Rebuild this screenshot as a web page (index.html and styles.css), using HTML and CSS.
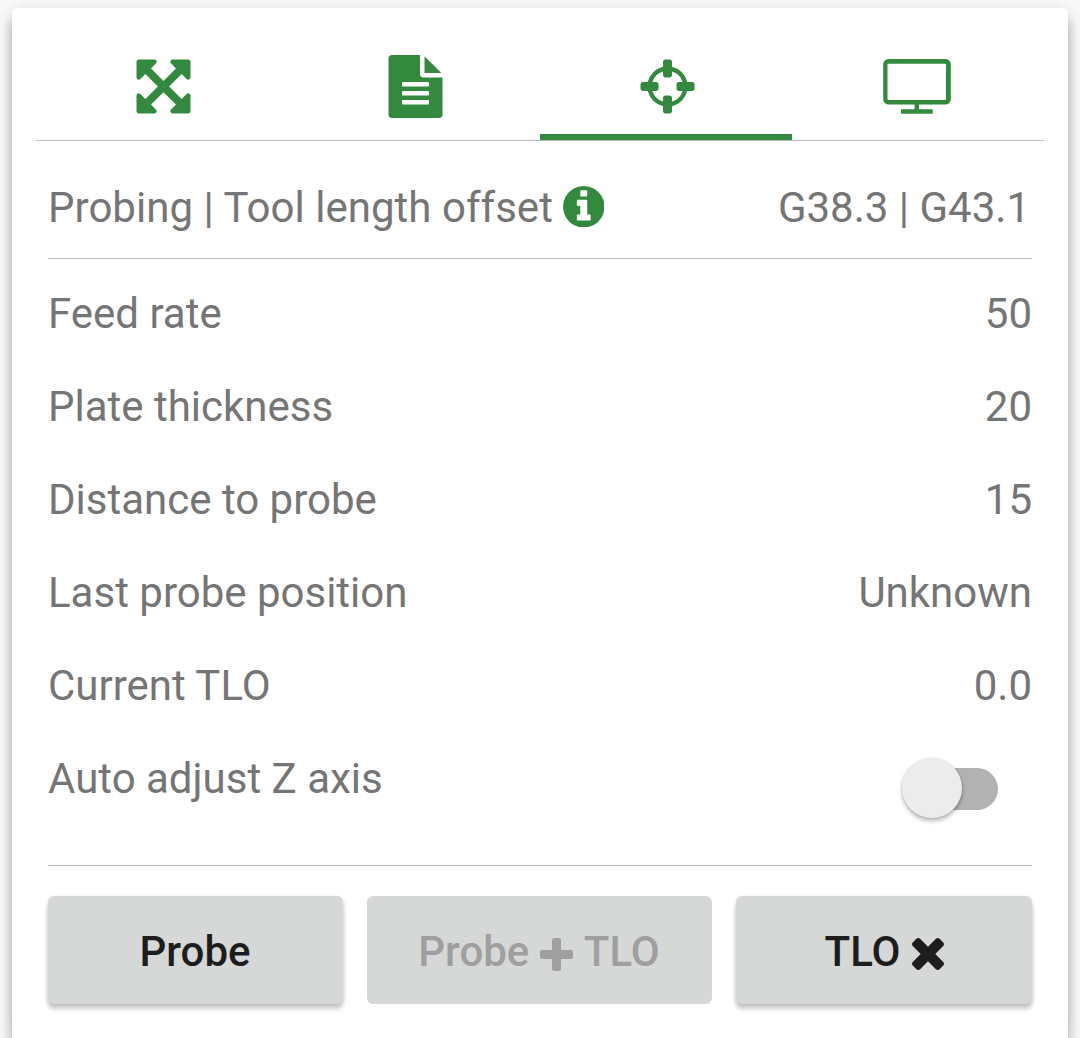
FILE: index.html
```html
<!DOCTYPE html>
<html lang="en">
<head>
<meta charset="utf-8">
<title>Probing</title>
<link rel="stylesheet" href="styles.css">
</head>
<body>
<main class="card">
  <nav class="tabs">
    <a class="tab"><svg class="tab-icon" viewBox="0 0 1792 1792"><path d="M1411 541l-355 355 355 355 144-144q29-31 70-14 39 17 39 59v448q0 26-19 45t-45 19h-448q-42 0-59-40-17-39 14-69l144-144-355-355-355 355 144 144q31 30 14 69-17 40-59 40h-448q-26 0-45-19t-19-45v-448q0-42 40-59 39-17 69 14l144 144 355-355-355-355-144 144q-19 19-45 19-12 0-24-5-40-17-40-59v-448q0-26 19-45t45-19h448q42 0 59 40 17 39-14 69l-144 144 355 355 355-355-144-144q-31-30-14-69 17-40 59-40h448q26 0 45 19t19 45v448q0 42-39 59-13 5-25 5-26 0-45-19z"/></svg></a>
    <a class="tab"><svg class="tab-icon" viewBox="0 0 1792 1792"><path d="M1596 476q14 14 28 36h-472v-472q22 14 36 28zm-476 164h544v1056q0 40-28 68t-68 28h-1344q-40 0-68-28t-28-68v-1600q0-40 28-68t68-28h800v544q0 40 28 68t68 28zm160 736v-64q0-14-9-23t-23-9h-704q-14 0-23 9t-9 23v64q0 14 9 23t23 9h704q14 0 23-9t9-23zm0-256v-64q0-14-9-23t-23-9h-704q-14 0-23 9t-9 23v64q0 14 9 23t23 9h704q14 0 23-9t9-23zm0-256v-64q0-14-9-23t-23-9h-704q-14 0-23 9t-9 23v64q0 14 9 23t23 9h704q14 0 23-9t9-23z"/></svg></a>
    <a class="tab tab-active"><svg class="tab-icon" viewBox="0 0 1792 1792"><path d="M1325 1024h-109q-26 0-45-19t-19-45v-128q0-26 19-45t45-19h109q-32-108-112.5-188.5t-188.5-112.5v109q0 26-19 45t-45 19h-128q-26 0-45-19t-19-45v-109q-108 32-188.5 112.5t-112.5 188.5h109q26 0 45 19t19 45v128q0 26-19 45t-45 19h-109q32 108 112.5 188.5t188.5 112.5v-109q0-26 19-45t45-19h128q26 0 45 19t19 45v109q108-32 188.5-112.5t112.5-188.5zm339-192v128q0 26-19 45t-45 19h-143q-37 161-154.5 278.5t-278.5 154.5v143q0 26-19 45t-45 19h-128q-26 0-45-19t-19-45v-143q-161-37-278.5-154.5t-154.5-278.5h-143q-26 0-45-19t-19-45v-128q0-26 19-45t45-19h143q37-161 154.5-278.5t278.5-154.5v-143q0-26 19-45t45-19h128q26 0 45 19t19 45v143q161 37 278.5 154.5t154.5 278.5h143q26 0 45 19t19 45z"/></svg></a>
    <a class="tab"><svg class="tab-icon tab-icon-wide" viewBox="0 0 68 63"><path fill-rule="evenodd" d="M5.500 4H62.500a5.300 5.300 0 0 1 5.300 5.300V44.300a5.300 5.300 0 0 1-5.300 5.300H36v4.600h13.200q.5 0 .5.500v3.500q0 .5-.5.500H18.500q-.5 0-.5-.5v-3.500q0-.5.500-.5H31.500v-4.600H5.500A5.300 5.300 0 0 1 .2 44.300V9.300A5.300 5.300 0 0 1 5.500 4zM5.500 8.800a1 1 0 0 0-1 1V44a1 1 0 0 0 1 1H62a1 1 0 0 0 1-1V9.800a1 1 0 0 0-1-1z"/></svg></a>
  </nav>

  <section class="panel">
    <header class="heading">
      <span class="title">Probing | Tool length offset</span>
      <svg class="info-icon" viewBox="128 128 1536 1536"><path d="M1152 1376v-160q0-14-9-23t-23-9h-96v-512q0-14-9-23t-23-9h-320q-14 0-23 9t-9 23v160q0 14 9 23t23 9h96v320h-96q-14 0-23 9t-9 23v160q0 14 9 23t23 9h448q14 0 23-9t9-23zm-128-896v-160q0-14-9-23t-23-9h-192q-14 0-23 9t-9 23v160q0 14 9 23t23 9h192q14 0 23-9t9-23zm640 416q0 209-103 385.500t-279.500 279.500-385.500 103-385.500-103-279.500-279.500-103-385.500 103-385.500 279.500-279.500 385.500-103 385.500 103 279.500 279.500 103 385.500z"/></svg>
      <span class="codes">G38.3 | G43.1</span>
    </header>
    <div class="rows">
      <div class="row"><span>Feed rate</span><span>50</span></div>
      <div class="row"><span>Plate thickness</span><span>20</span></div>
      <div class="row"><span>Distance to probe</span><span>15</span></div>
      <div class="row"><span>Last probe position</span><span>Unknown</span></div>
      <div class="row"><span>Current TLO</span><span>0.0</span></div>
      <div class="row"><span>Auto adjust Z axis</span><span class="switch"><span class="thumb"></span></span></div>
    </div>
    <footer class="actions">
      <button class="button">Probe</button>
      <button class="button" disabled>Probe<svg class="plus-icon" viewBox="192 128 1408 1408"><path d="M1600 736v192q0 40-28 68t-68 28h-416v416q0 40-28 68t-68 28h-192q-40 0-68-28t-28-68v-416h-416q-40 0-68-28t-28-68v-192q0-40 28-68t68-28h416v-416q0-40 28-68t68-28h192q40 0 68 28t28 68v416h416q40 0 68 28t28 68z"/></svg>TLO</button>
      <button class="button button-clear">TLO<svg class="times-icon" viewBox="302 366 1188 1188"><path d="M1490 1322q0 40-28 68l-136 136q-28 28-68 28t-68-28l-294-294-294 294q-28 28-68 28t-68-28l-136-136q-28-28-28-68t28-68l294-294-294-294q-28-28-28-68t28-68l136-136q28-28 68-28t68 28l294 294 294-294q28-28 68-28t68 28l136 136q28 28 28 68t-28 68l-294 294 294 294q28 28 28 68z"/></svg></button>
    </footer>
  </section>
</main>
</body>
</html>
```
FILE: styles.css
```css
* { box-sizing: border-box; }

body {
  margin: 0;
  height: 1038px;
  padding: 8px 12px 0;
  background: #fafafa;
  color: #757575;
  font: 400 42px/50px Roboto, sans-serif;
}

svg { display: block; fill: #338a3e; }

.card {
  height: 1030px;
  padding: 0 24px;
  border-radius: 6px 6px 0 0;
  background: #fff;
  box-shadow: 0 12px 12px rgba(0, 0, 0, .24), 0 4px 20px rgba(0, 0, 0, .16);
}

.tabs {
  display: grid;
  grid-template-columns: repeat(4, 1fr);
  height: 133px;
  border-bottom: 1px solid #bdbdbd;
}

.tab {
  display: flex;
  justify-content: center;
  padding: 47px 0 0 2px;
}

.tab-active { border-bottom: 6px solid #338a3e; }

.tab-icon { width: 63px; height: 63px; }
.tab-icon-wide { width: 68px; margin-right: 4px; }

.panel { padding: 0 12px; }

.heading {
  display: flex;
  align-items: center;
  height: 118px;
  padding: 16px 2px 0 0;
  border-bottom: 1px solid #bdbdbd;
}

.title { letter-spacing: .03px; }
.info-icon { width: 41.500px; height: 41.500px; margin: 0 0 2px 10px; }
.codes { margin-left: auto; }

.rows {
  height: 607px;
  padding-top: 30px;
  border-bottom: 1px solid #bdbdbd;
}

.row {
  display: flex;
  justify-content: space-between;
  height: 93px;
}

.switch {
  width: 92px;
  height: 42px;
  margin: 14px 34px 0 0;
  border-radius: 21px;
  background: #b2b2b2;
}

.thumb {
  display: block;
  width: 60px;
  height: 60px;
  margin: -10px 0 0 -4px;
  border-radius: 50%;
  background: #ececec;
  box-shadow: 0 3px 4px rgba(0, 0, 0, .28), 0 0 3px rgba(0, 0, 0, .08);
}

.actions {
  display: grid;
  grid-template-columns: 295px 345px 296px;
  gap: 24px;
  padding-top: 30px;
}

.button {
  display: flex;
  align-items: center;
  justify-content: center;
  height: 108px;
  padding: 4px 1px 0 0;
  border: 0;
  border-radius: 6px;
  background: #d6d8d7;
  color: #1d1d1d;
  font: 500 42px/50px Roboto, sans-serif;
  box-shadow: 0 5px 5px rgba(0, 0, 0, .2), 0 1px 4px rgba(0, 0, 0, .1);
}

.button:disabled { color: #9f9f9f; box-shadow: none; }
.button-clear { padding: 4px 0 0 1px; }
.button svg { fill: currentColor; }

.plus-icon { width: 33px; height: 33px; margin: 5px 10.500px 0 11px; }
.times-icon { width: 32px; height: 32px; margin: 4px 0 0 12px; }
```
